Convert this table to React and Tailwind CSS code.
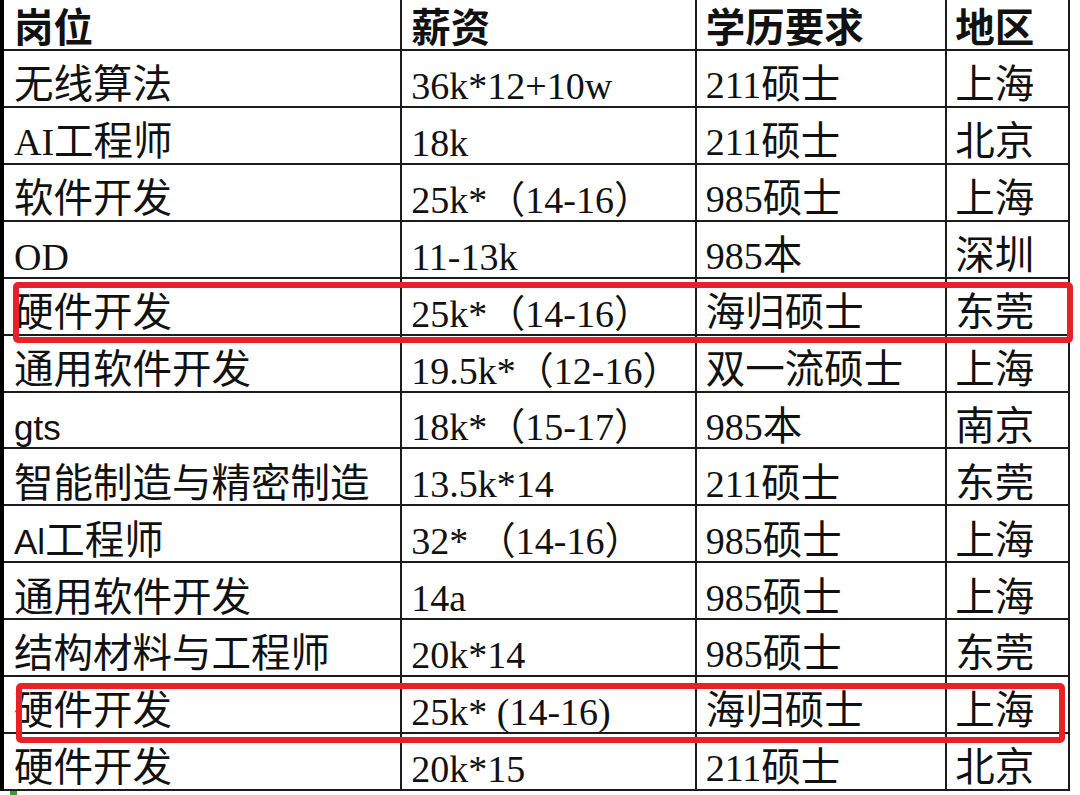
import React from "react";

const rows = [
  ["无线算法", "36k*12+10w", "211硕士", "上海"],
  ["AI工程师", "18k", "211硕士", "北京"],
  ["软件开发", "25k*（14-16）", "985硕士", "上海"],
  ["OD", "11-13k", "985本", "深圳"],
  ["硬件开发", "25k*（14-16）", "海归硕士", "东莞"],
  ["通用软件开发", "19.5k*（12-16）", "双一流硕士", "上海"],
  ["gts", "18k*（15-17）", "985本", "南京"],
  ["智能制造与精密制造", "13.5k*14", "211硕士", "东莞"],
  ["Al工程师", "32* （14-16）", "985硕士", "上海"],
  ["通用软件开发", "14a", "985硕士", "上海"],
  ["结构材料与工程师", "20k*14", "985硕士", "东莞"],
  ["硬件开发", "25k* (14-16)", "海归硕士", "上海"],
  ["硬件开发", "20k*15", "211硕士", "北京"],
];

const sansFirst = new Set(["gts", "Al工程师"]);

function Text({ value, sans }) {
  const parts = value.split(/([\u4e00-\u9fff]+)/).filter(Boolean);
  return (
    <span>
      {parts.map((p, i) =>
        /[\u4e00-\u9fff]/.test(p) ? (
          <span key={i} className="text-[39.5px]">
            {p}
          </span>
        ) : (
          <span
            key={i}
            className={
              sans
                ? "text-[35px] font-['Liberation_Sans','Noto_Sans_CJK_SC',sans-serif]"
                : ""
            }
          >
            {p}
          </span>
        )
      )}
    </span>
  );
}

function Cell({ w, pl, value, sans, last, header }) {
  return (
    <div
      className={`${w} ${pl} ${last ? "" : "border-r-2 border-[#1c1c1c]"} flex items-center h-full min-h-0 ${
        header ? "pt-[10px]" : "pt-[15px]"
      } whitespace-pre font-['Liberation_Serif','Noto_Sans_CJK_SC',serif] leading-none`}
    >
      <Text value={value} sans={sans} />
    </div>
  );
}

function Row({ cells, header, sans }) {
  return (
    <div
      className={`flex min-h-0 border-b-2 border-[#1c1c1c] ${
        header ? "h-[51px] shrink-0 font-bold" : "flex-1 basis-0"
      }`}
    >
      <Cell w="w-[399px]" pl="pl-[10px]" header={header} sans={sans} value={cells[0]} />
      <Cell w="w-[295px]" pl="pl-[9px]" header={header} value={cells[1]} />
      <Cell w="w-[251px]" pl="pl-[9px]" header={header} value={cells[2]} />
      <Cell w="w-[121px]" pl="pl-[8px]" header={header} last value={cells[3]} />
    </div>
  );
}

export default function App() {
  return (
    <div className="relative w-[1080px] h-[795px] bg-white overflow-hidden text-[#111] text-[38px]">
      <div className="w-[1070px] border-l-4 border-r-2 border-[#1c1c1c] border-l-black flex flex-col h-[791px]">
        <Row header cells={["岗位", "薪资", "学历要求", "地区"]} />
        {rows.map((r, i) => (
          <Row key={i} cells={r} sans={sansFirst.has(r[0])} />
        ))}
      </div>
      <div className="ml-[10px] w-[7px] h-[4px] bg-[#3a9a3a]" />
      <div className="absolute left-[13px] top-[282px] w-[1060px] h-[61px] border-[6px] border-[#e8202a] rounded-[5px]" />
      <div className="absolute left-[16px] top-[683px] w-[1049px] h-[60px] border-[6px] border-[#e8202a] rounded-[5px]" />
    </div>
  );
}
